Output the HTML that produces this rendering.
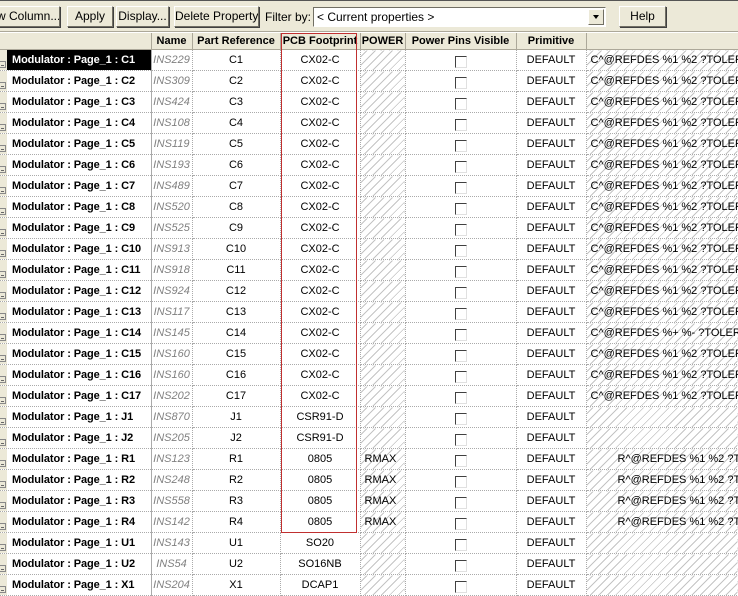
<!DOCTYPE html>
<html><head><style>
body{margin:0;width:738px;height:587px;overflow:hidden;background:#fff;font-family:"Liberation Sans",sans-serif;font-size:11px;position:relative}
.tb{position:absolute;left:0;top:0;width:738px;height:32px;background:#ece9d8;border-top:1px solid #555;box-sizing:border-box;border-bottom:1px solid #aca899}
.btn{position:absolute;top:5px;height:21px;box-sizing:border-box;background:#ece9d8;border:1px solid;border-color:#fff #716f64 #716f64 #fff;box-shadow:1px 1px 0 #404040;text-align:center;line-height:19px;font-size:12px;white-space:nowrap;overflow:hidden}
.lbl{position:absolute;top:9px;left:265px;font-size:12px}
.combo{position:absolute;left:313px;top:6px;width:293px;height:20px;box-sizing:border-box;background:#fff;border:1px solid;border-color:#716f64 #fff #fff #716f64;font-size:12px;line-height:18px;padding-left:3px}
.arr{position:absolute;right:1px;top:1px;width:16px;height:16px;background:#ece9d8;border:1px solid;border-color:#fff #716f64 #716f64 #fff;box-sizing:border-box}
.arr:after{content:"";position:absolute;left:4px;top:5px;border:3.5px solid transparent;border-top:4px solid #000}
table{position:absolute;left:0;top:33px;border-collapse:collapse;table-layout:fixed;width:738px}
td,th{padding:0;height:20px;border-right:1px dotted #aaa;border-bottom:1px dotted #aaa;overflow:hidden;white-space:nowrap;text-align:center;font-size:11px}
th{height:16px;background:#ece9d8;font-weight:bold;border:1px solid #aca899;border-top:none;font-size:11px}
th.f{border-left:none}
td.h{text-align:left;font-weight:bold;font-size:11px;letter-spacing:-0.1px;border-right:1px solid #aaa;position:relative;padding-left:12px}
td.h:before{content:"";position:absolute;left:0;top:0;width:7px;height:21px;background:#ece9d8}
td.h:after{content:"";position:absolute;left:0;top:11px;width:5px;height:5px;border:1px solid #888;border-left:none;background:linear-gradient(#666,#666) 1px 3px/3px 1px no-repeat}
tr.sel td.h{background:#000;color:#fff}
td.n{color:#808080;font-style:italic}
.hat{background:repeating-linear-gradient(135deg,#fff 0 4px,#c4c4c4 4px 5px,#fff 5px 6px)}
td.l{text-align:left;padding-left:4px}
td.r{text-align:left;padding-left:31px}
.cb{display:inline-block;width:10px;height:10px;border:1px solid;border-color:#404040 #e0e0e0 #e0e0e0 #404040;margin-top:3px;vertical-align:middle}
.red{position:absolute;left:281px;top:33px;width:74px;height:498px;border:1px solid #c03030}
</style></head><body>
<div class="tb">
<div class="btn" style="left:-4px;width:64px">w Column...</div>
<div class="btn" style="left:67px;width:46px">Apply</div>
<div class="btn" style="left:116px;width:53px">Display...</div>
<div class="btn" style="left:174px;width:85px">Delete Property</div>
<div class="lbl">Filter by:</div>
<div class="combo">&lt; Current properties &gt;<div class="arr"></div></div>
<div class="btn" style="left:619px;width:47px">Help</div>
</div>
<table>
<colgroup><col style="width:151px"><col style="width:41px"><col style="width:88px"><col style="width:80px"><col style="width:45px"><col style="width:111px"><col style="width:70px"><col style="width:152px"></colgroup>
<tr><th class="f"></th><th>Name</th><th>Part Reference</th><th>PCB Footprint</th><th>POWER</th><th>Power Pins Visible</th><th>Primitive</th><th></th></tr>
<tr class="sel"><td class="h">Modulator : Page_1 : C1</td><td class="n">INS229</td><td>C1</td><td>CX02-C</td><td class="hat"></td><td><span class="cb"></span></td><td>DEFAULT</td><td class="hat l">C^@REFDES %1 %2 ?TOLERA</td></tr>
<tr><td class="h">Modulator : Page_1 : C2</td><td class="n">INS309</td><td>C2</td><td>CX02-C</td><td class="hat"></td><td><span class="cb"></span></td><td>DEFAULT</td><td class="hat l">C^@REFDES %1 %2 ?TOLERA</td></tr>
<tr><td class="h">Modulator : Page_1 : C3</td><td class="n">INS424</td><td>C3</td><td>CX02-C</td><td class="hat"></td><td><span class="cb"></span></td><td>DEFAULT</td><td class="hat l">C^@REFDES %1 %2 ?TOLERA</td></tr>
<tr><td class="h">Modulator : Page_1 : C4</td><td class="n">INS108</td><td>C4</td><td>CX02-C</td><td class="hat"></td><td><span class="cb"></span></td><td>DEFAULT</td><td class="hat l">C^@REFDES %1 %2 ?TOLERA</td></tr>
<tr><td class="h">Modulator : Page_1 : C5</td><td class="n">INS119</td><td>C5</td><td>CX02-C</td><td class="hat"></td><td><span class="cb"></span></td><td>DEFAULT</td><td class="hat l">C^@REFDES %1 %2 ?TOLERA</td></tr>
<tr><td class="h">Modulator : Page_1 : C6</td><td class="n">INS193</td><td>C6</td><td>CX02-C</td><td class="hat"></td><td><span class="cb"></span></td><td>DEFAULT</td><td class="hat l">C^@REFDES %1 %2 ?TOLERA</td></tr>
<tr><td class="h">Modulator : Page_1 : C7</td><td class="n">INS489</td><td>C7</td><td>CX02-C</td><td class="hat"></td><td><span class="cb"></span></td><td>DEFAULT</td><td class="hat l">C^@REFDES %1 %2 ?TOLERA</td></tr>
<tr><td class="h">Modulator : Page_1 : C8</td><td class="n">INS520</td><td>C8</td><td>CX02-C</td><td class="hat"></td><td><span class="cb"></span></td><td>DEFAULT</td><td class="hat l">C^@REFDES %1 %2 ?TOLERA</td></tr>
<tr><td class="h">Modulator : Page_1 : C9</td><td class="n">INS525</td><td>C9</td><td>CX02-C</td><td class="hat"></td><td><span class="cb"></span></td><td>DEFAULT</td><td class="hat l">C^@REFDES %1 %2 ?TOLERA</td></tr>
<tr><td class="h">Modulator : Page_1 : C10</td><td class="n">INS913</td><td>C10</td><td>CX02-C</td><td class="hat"></td><td><span class="cb"></span></td><td>DEFAULT</td><td class="hat l">C^@REFDES %1 %2 ?TOLERA</td></tr>
<tr><td class="h">Modulator : Page_1 : C11</td><td class="n">INS918</td><td>C11</td><td>CX02-C</td><td class="hat"></td><td><span class="cb"></span></td><td>DEFAULT</td><td class="hat l">C^@REFDES %1 %2 ?TOLERA</td></tr>
<tr><td class="h">Modulator : Page_1 : C12</td><td class="n">INS924</td><td>C12</td><td>CX02-C</td><td class="hat"></td><td><span class="cb"></span></td><td>DEFAULT</td><td class="hat l">C^@REFDES %1 %2 ?TOLERA</td></tr>
<tr><td class="h">Modulator : Page_1 : C13</td><td class="n">INS117</td><td>C13</td><td>CX02-C</td><td class="hat"></td><td><span class="cb"></span></td><td>DEFAULT</td><td class="hat l">C^@REFDES %1 %2 ?TOLERA</td></tr>
<tr><td class="h">Modulator : Page_1 : C14</td><td class="n">INS145</td><td>C14</td><td>CX02-C</td><td class="hat"></td><td><span class="cb"></span></td><td>DEFAULT</td><td class="hat l">C^@REFDES %+ %- ?TOLERA</td></tr>
<tr><td class="h">Modulator : Page_1 : C15</td><td class="n">INS160</td><td>C15</td><td>CX02-C</td><td class="hat"></td><td><span class="cb"></span></td><td>DEFAULT</td><td class="hat l">C^@REFDES %1 %2 ?TOLERA</td></tr>
<tr><td class="h">Modulator : Page_1 : C16</td><td class="n">INS160</td><td>C16</td><td>CX02-C</td><td class="hat"></td><td><span class="cb"></span></td><td>DEFAULT</td><td class="hat l">C^@REFDES %1 %2 ?TOLERA</td></tr>
<tr><td class="h">Modulator : Page_1 : C17</td><td class="n">INS202</td><td>C17</td><td>CX02-C</td><td class="hat"></td><td><span class="cb"></span></td><td>DEFAULT</td><td class="hat l">C^@REFDES %1 %2 ?TOLERA</td></tr>
<tr><td class="h">Modulator : Page_1 : J1</td><td class="n">INS870</td><td>J1</td><td>CSR91-D</td><td class="hat"></td><td><span class="cb"></span></td><td>DEFAULT</td><td class="hat"></td></tr>
<tr><td class="h">Modulator : Page_1 : J2</td><td class="n">INS205</td><td>J2</td><td>CSR91-D</td><td class="hat"></td><td><span class="cb"></span></td><td>DEFAULT</td><td class="hat"></td></tr>
<tr><td class="h">Modulator : Page_1 : R1</td><td class="n">INS123</td><td>R1</td><td>0805</td><td class="hat l">RMAX</td><td><span class="cb"></span></td><td>DEFAULT</td><td class="hat r">R^@REFDES %1 %2 ?TOLE</td></tr>
<tr><td class="h">Modulator : Page_1 : R2</td><td class="n">INS248</td><td>R2</td><td>0805</td><td class="hat l">RMAX</td><td><span class="cb"></span></td><td>DEFAULT</td><td class="hat r">R^@REFDES %1 %2 ?TOLE</td></tr>
<tr><td class="h">Modulator : Page_1 : R3</td><td class="n">INS558</td><td>R3</td><td>0805</td><td class="hat l">RMAX</td><td><span class="cb"></span></td><td>DEFAULT</td><td class="hat r">R^@REFDES %1 %2 ?TOLE</td></tr>
<tr><td class="h">Modulator : Page_1 : R4</td><td class="n">INS142</td><td>R4</td><td>0805</td><td class="hat l">RMAX</td><td><span class="cb"></span></td><td>DEFAULT</td><td class="hat r">R^@REFDES %1 %2 ?TOLE</td></tr>
<tr><td class="h">Modulator : Page_1 : U1</td><td class="n">INS143</td><td>U1</td><td>SO20</td><td class="hat"></td><td><span class="cb"></span></td><td>DEFAULT</td><td class="hat"></td></tr>
<tr><td class="h">Modulator : Page_1 : U2</td><td class="n">INS54</td><td>U2</td><td>SO16NB</td><td class="hat"></td><td><span class="cb"></span></td><td>DEFAULT</td><td class="hat"></td></tr>
<tr><td class="h">Modulator : Page_1 : X1</td><td class="n">INS204</td><td>X1</td><td>DCAP1</td><td class="hat"></td><td><span class="cb"></span></td><td>DEFAULT</td><td class="hat"></td></tr>
</table>
<div class="red"></div>
</body></html>
